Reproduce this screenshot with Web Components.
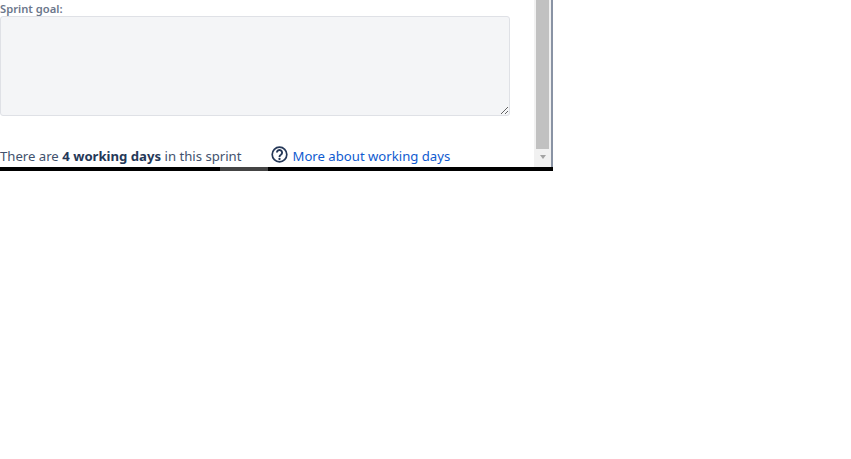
<!DOCTYPE html>
<html lang="en">
<head>
<meta charset="utf-8">
<title>Sprint</title>
<style>
	html, body { margin: 0; padding: 0; background: #fff; }
	body { font-family: "Noto Sans", "Open Sans", sans-serif; }
</style>
</head>
<body>
<sprint-dialog>
	<goal-field label="Sprint goal:"></goal-field>
	<working-days days="4"></working-days>
</sprint-dialog>

<script>
class SprintDialog extends HTMLElement {
	constructor() {
		super();
		const shadow = this.attachShadow({mode: 'open'});
		shadow.innerHTML = `
		<style>
			:host { display: block; width: 553px; }
			.main { display: flex; height: 167px; }
			.content { width: 534px; }
			.scrollbar { width: 17px; background: #f1f1f1; display: flex; flex-direction: column; align-items: center; }
			.thumb { width: 13px; height: 149px; background: #c1c1c1; }
			.arrow { margin-top: 6px; width: 0; height: 0; border-left: 3.5px solid transparent; border-right: 3.5px solid transparent; border-top: 4px solid #a3a3a3; }
			.edge { width: 2px; background: #8993a4; }
			.bottom { display: flex; height: 4px; background: #000; padding-left: 220px; }
			.bottom div { width: 48px; background: #444; }
		</style>
		<div class="main">
			<div class="content"><slot></slot></div>
			<div class="scrollbar"><div class="thumb"></div><div class="arrow"></div></div>
			<div class="edge"></div>
		</div>
		<div class="bottom"><div></div></div>`;
	}
}
customElements.define("sprint-dialog", SprintDialog);

class GoalField extends HTMLElement {
	constructor() {
		super();
		const shadow = this.attachShadow({mode: 'open'});
		shadow.innerHTML = `
		<style>
			:host { display: block; width: 510px; height: 147px; }
			label { display: block; height: 16px; font-size: 11.2px; line-height: 17px; font-weight: 600; color: #6b778c; }
			textarea { display: block; box-sizing: border-box; width: 510px; height: 100px; margin: 0; padding: 6px; border: 1px solid #dfe1e6; border-radius: 3px; background: #f4f5f7; outline: none; font: inherit; }
		</style>
		<label for="goal"></label>
		<textarea id="goal"></textarea>`;
		shadow.querySelector("label").textContent = this.getAttribute("label");
	}
}
customElements.define("goal-field", GoalField);

class WorkingDays extends HTMLElement {
	constructor() {
		super();
		const shadow = this.attachShadow({mode: 'open'});
		const days = this.getAttribute("days");
		shadow.innerHTML = `
		<style>
			:host { display: flex; align-items: flex-end; height: 18px; font-size: 13.15px; line-height: 18px; color: #42526e; white-space: nowrap; }
			.note { width: 271px; }
			b { font-weight: 700; color: #253858; }
			svg { display: block; width: 17px; height: 17px; margin-right: 4.5px; position: relative; top: -2px; }
			a { color: #0f5bd0; text-decoration: none; }
		</style>
		<span class="note">There are <b>${days} working days</b> in this sprint</span>
		<svg viewBox="0 0 17 17" fill="none" stroke="#253858">
			<circle cx="8.5" cy="8.5" r="7.3" stroke-width="1.7"/>
			<path d="M5.9 6.6a2.6 2.6 0 1 1 4 2.2c-1 .6-1.4 1-1.4 2.1" stroke-width="1.9"/>
			<circle cx="8.5" cy="13" r="1.15" fill="#253858" stroke="none"/>
		</svg>
		<a href="#">More about working days</a>`;
	}
}
customElements.define("working-days", WorkingDays);
</script>
</body>
</html>
